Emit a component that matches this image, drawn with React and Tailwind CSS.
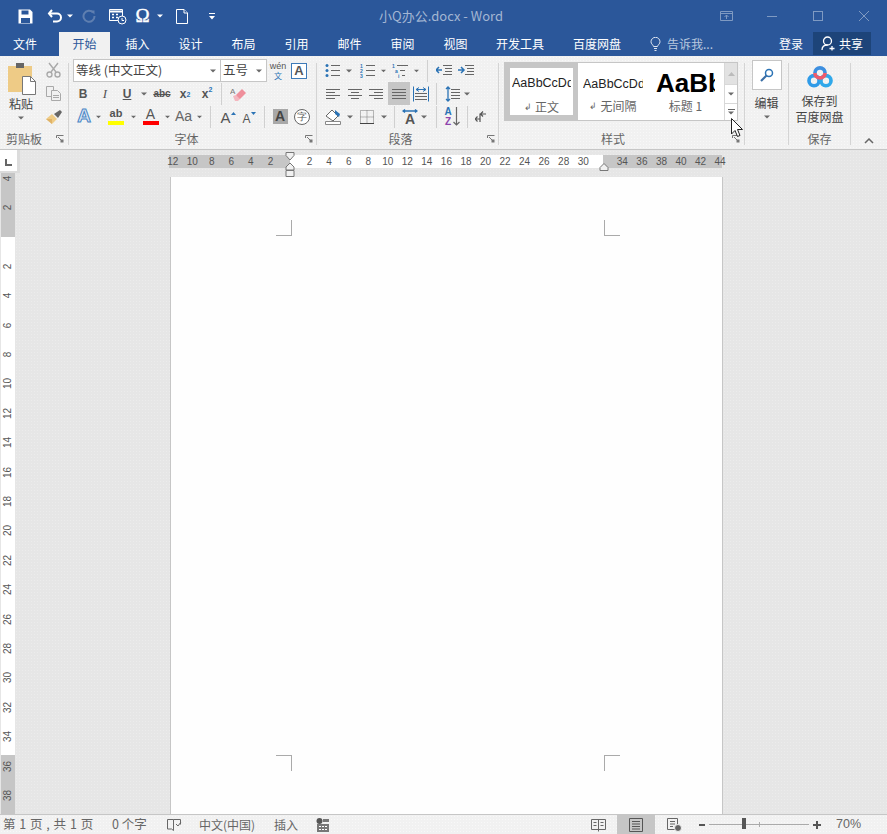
import React from 'react'

const Dd = ({ color = '#6a6a6a' }) => (
  <svg width="6" height="4" viewBox="0 0 6 4"><path d="M0 0.5h6L3 3.5z" fill={color} /></svg>
)

// one slot of a ribbon row, the class sets the width
const Cell = ({ className = '', children }) => (
  <div className={`flex h-full shrink-0 items-center justify-center ${className}`}>{children}</div>
)
const Sep = () => <div className="my-1 w-px shrink-0 bg-[#d4d4d4]" />
const RowSep = ({ className }) => (
  <Cell className={className}><div className="h-[22px] w-px bg-[#d0d0d0]" /></Cell>
)
const Launcher = ({ className = '' }) => (
  <svg className={className} width="8" height="8" viewBox="0 0 8 8" fill="none" stroke="#777">
    <path d="M0.5 3V0.5H7.5" /><path d="M7.5 7.5H4.5V4.5H7.5z" fill="#777" stroke="none" /><path d="M2 2l4 4" />
  </svg>
)
const GroupLabel = ({ className, children }) => (
  <div className={`text-center text-[12px] leading-[21px] text-[#666] ${className}`}>{children}</div>
)

const Lines = ({ w = 14, rows, color = '#666' }) => (
  <svg width={w} height="14" viewBox={`0 0 ${w} 14`} stroke={color}>
    {rows.map(([x1, x2, y], i) => <path key={i} d={`M${x1} ${y}.5H${x2}`} />)}
  </svg>
)

function Qat() {
  return (
    <div className="flex items-center">
      <Cell className="ml-[16px] w-[18px]">
        <svg width="15" height="15" viewBox="0 0 15 15"><path d="M0.5 0.5H12L14.5 3V14.5H0.5z" fill="#fff" /><path d="M3.5 1.5h7v4h-7z" fill="#2b579a" /><path d="M3 9h9v5H3z" fill="#2b579a" /></svg>
      </Cell>
      <Cell className="ml-[12px] w-[17px]">
        <svg width="16" height="14" viewBox="0 0 16 14" fill="none" stroke="#fff" strokeWidth="2"><path d="M5 1L2 4.5 5 8" /><path d="M2 4.5H10a4 4 0 0 1 0 8H6" /></svg>
      </Cell>
      <Cell className="ml-[3px] w-[7px]"><Dd color="#fff" /></Cell>
      <Cell className="ml-[8px] w-[16px]">
        <svg width="14" height="14" viewBox="0 0 14 14" fill="none" stroke="#5f7fb0" strokeWidth="2"><path d="M11 3.5A5.5 5.5 0 1 0 12.5 7" /><path d="M8.5 1.5h4v4z" fill="#5f7fb0" stroke="none" /></svg>
      </Cell>
      <Cell className="ml-[12px] w-[18px]">
        <svg width="18" height="17" viewBox="0 0 18 17" fill="none" stroke="#fff"><path d="M0.5 1.5h13v11H0.5z" /><path d="M0.5 3.5h13" strokeWidth="2" /><path d="M3 6.5h2M7 6.5h2M3 9.5h2M7 9.5h2" strokeWidth="1.5" /><circle cx="13" cy="12" r="4" fill="#2b579a" /><path d="M13 10v2.5h2" /></svg>
      </Cell>
      <span className="ml-[8px] w-[15px] text-center font-['Liberation_Serif',serif] text-[19px] leading-[18px] text-white [-webkit-text-stroke:0.4px_#fff]">Ω</span>
      <Cell className="ml-[6px] w-[7px]"><Dd color="#fff" /></Cell>
      <Cell className="ml-[12px] w-[13px]">
        <svg width="12" height="15" viewBox="0 0 12 15" fill="#2b579a" stroke="#fff"><path d="M0.5 0.5H8L11.5 4V14.5H0.5z" /><path d="M8 0.5V4H11.5" /></svg>
      </Cell>
      <Cell className="ml-[20px] w-[7px]">
        <svg width="6" height="7" viewBox="0 0 6 7" fill="#fff"><path d="M0 0h6v1H0zM0 3h6L3 6.5z" /></svg>
      </Cell>
    </div>
  )
}

function TitleBar() {
  return (
    <div className="flex h-[32px] items-center justify-between">
      <Qat />
      <div className="absolute left-[379px] text-[13px] text-[#a3b6d3]">小Q办公.docx - Word</div>
      <div className="flex items-center pr-[18px]">
        <svg width="13" height="10" viewBox="0 0 13 10" fill="none" stroke="#7f9ac2"><path d="M0.5 0.5h12v9H0.5zM0.5 2.5h12" /><path d="M6.5 8V4M4.5 6l2-2 2 2" /></svg>
        <div className="ml-[34px] h-px w-[10px] bg-[#7f9ac2]" />
        <div className="ml-[36px] h-[10px] w-[10px] border border-[#7f9ac2]" />
        <svg className="ml-[36px]" width="10" height="10" viewBox="0 0 10 10" stroke="#7f9ac2"><path d="M0 0l10 10M10 0L0 10" /></svg>
      </div>
    </div>
  )
}

function Tabs() {
  const tabs = ['插入', '设计', '布局', '引用', '邮件', '审阅', '视图']
  return (
    <div className="flex h-[24px] items-stretch whitespace-nowrap text-[12px] text-white">
      <div className="flex w-[50px] items-center justify-center">文件</div>
      <div className="ml-[9px] flex w-[51px] items-center justify-center bg-[#f1f1f1] text-[#2b579a]">开始</div>
      <div className="ml-px flex">
        {tabs.map((t) => <div key={t} className="flex w-[53px] items-center justify-center">{t}</div>)}
      </div>
      <div className="ml-[14px] flex w-[48px] items-center">开发工具</div>
      <div className="ml-[29px] flex w-[48px] items-center">百度网盘</div>
      <div className="ml-[29px] flex items-center text-[#b9c8df]">
        <svg width="11" height="14" viewBox="0 0 11 14" fill="none" stroke="#dfe6f1"><path d="M3.5 9.5C3 7.5 1 7 1 4.8a4.5 4.5 0 0 1 9 0C10 7 8 7.5 7.5 9.5z" /><path d="M4 11.5h3M4.500 13.500h2" /></svg>
        <span className="ml-[6px] w-[45px]">告诉我...</span>
      </div>
      <div className="ml-[67px] flex w-[24px] items-center">登录</div>
      <div className="ml-[10px] flex h-[23px] w-[58px] items-center justify-center bg-[#1d4479]">
        <svg width="15" height="15" viewBox="0 0 15 15" fill="none" stroke="#fff" strokeWidth="1.3"><circle cx="6.500" cy="5" r="4" /><path d="M1 14c0-3 2-5 5.500-5" /><path d="M11 10v4.500M8.500 12.500h5" /></svg>
        <span className="ml-[3px]">共享</span>
      </div>
    </div>
  )
}

function Clipboard() {
  return (
    <div className="flex w-[68px] shrink-0 flex-col">
      <div className="flex h-[72px]">
        <div className="flex w-[42px] flex-col items-center">
          <svg className="mt-[4px] ml-[2px]" width="28" height="32" viewBox="0 0 28 32">
            <path d="M0 3h24v26H0z" fill="#eecb86" /><path d="M8 0h8v5H8z" fill="#666" /><path d="M14.500 13.500h8l5 5v13h-13z" fill="#fff" stroke="#777" /><path d="M22.500 13.500v5h5" fill="none" stroke="#777" />
          </svg>
          <div className="mt-px text-[12px] leading-[16px] text-[#444]">粘贴</div>
          <div className="mt-[3px] flex h-[6px] items-center"><Dd /></div>
        </div>
        <div className="flex w-[22px] flex-col items-center">
          <svg className="mt-[3px]" width="15" height="16" viewBox="0 0 15 16" fill="none" stroke="#a9a9a9" strokeWidth="1.4"><path d="M3 1l7 9M12 1L5 10" /><circle cx="3.500" cy="12.500" r="2.500" /><circle cx="11.500" cy="12.500" r="2.500" /></svg>
          <svg className="mt-[8px]" width="15" height="15" viewBox="0 0 15 15" fill="#f1f1f1" stroke="#a9a9a9"><path d="M0.5 0.500h7v10h-7z" /><path d="M5.500 4.500h6l3 3v7h-9z" /><path d="M7 9.500h6M7 11.500h6" /></svg>
          <svg className="mt-[9px] ml-[2px]" width="18" height="15" viewBox="0 0 18 15"><path d="M1 9l6-5 5 5-5 5z" fill="#eecb86" /><path d="M1 9l6 0 0 5z" fill="#e0b368" /><path d="M9 4l6-4 2 2-4 6z" fill="#666" /></svg>
        </div>
      </div>
      <div className="flex items-center">
        <GroupLabel className="w-[48px]">剪贴板</GroupLabel>
        <Launcher className="ml-[8px]" />
      </div>
    </div>
  )
}

function FontGroup() {
  return (
    <div className="flex w-[247px] shrink-0 flex-col pl-[3px]">
      <div className="flex h-[23px] items-center">
        <div className="ml-[1px] flex h-[23px] w-[148px] items-center justify-between border border-[#c6c6c6] bg-white pr-[4px] pl-[2px] text-[12.5px] text-[#444]">
          <span>等线 (中文正文)</span><Dd />
        </div>
        <div className="-ml-px flex h-[23px] w-[47px] items-center justify-between border border-[#c6c6c6] bg-white pr-[4px] pl-[2px] text-[12.5px] text-[#444]">
          <span>五号</span><Dd />
        </div>
        <Cell className="w-[22px] flex-col">
          <span className="font-['Liberation_Sans',sans-serif] text-[9px] leading-[10px] text-[#555]">wén</span>
          <span className="text-[8px] leading-[10px] text-[#2b73b5]">文</span>
        </Cell>
        <Cell className="w-[20px]">
          <div className="flex h-[16px] w-[16px] items-center justify-center border border-[#3d7ab8] bg-white font-['Liberation_Sans',sans-serif] text-[13px] font-bold text-[#555]">A</div>
        </Cell>
      </div>
      <div className="flex h-[23px] items-center font-['Liberation_Sans',sans-serif] text-[#555]">
        <Cell className="w-[22px] text-[12px] font-bold">B</Cell>
        <Cell className="w-[22px] font-['Liberation_Serif',serif] text-[13px] italic">I</Cell>
        <Cell className="w-[22px] text-[12px] font-bold underline">U</Cell>
        <Cell className="w-[12px]"><Dd /></Cell>
        <Cell className="w-[24px] text-[10px] font-bold line-through">abc</Cell>
        <Cell className="w-[22px] text-[12px] font-bold">x<sub className="text-[7px] text-[#2b73b5]">2</sub></Cell>
        <Cell className="w-[22px] text-[12px] font-bold">x<sup className="text-[7px] text-[#2b73b5]">2</sup></Cell>
        <RowSep className="w-[6px]" />
        <Cell className="w-[28px]">
          <svg width="16" height="16" viewBox="0 0 16 16"><path d="M6 9l6-6 4 4-6 6H7z" fill="#ef8f9b" /><path d="M3 10l3-1 4 4-2 2H5z" fill="#f4b7bf" /><text x="0" y="8" fontSize="8" fill="#777" fontFamily="Liberation Sans">A</text></svg>
        </Cell>
      </div>
      <div className="flex h-[23px] items-center font-['Liberation_Sans',sans-serif] text-[#555]">
        <Cell className="w-[24px] text-[19px] font-bold text-[#dbe7f5] [-webkit-text-stroke:1px_#4a86c5]">A</Cell>
        <Cell className="w-[5px]"><Dd /></Cell>
        <Cell className="w-[30px]">
          <div className="flex flex-col items-center">
            <span className="h-[11px] text-[11px] leading-[11px] font-bold">ab</span>
            <div className="mt-[2px] h-[4px] w-[16px] bg-[#ffff00]" />
          </div>
        </Cell>
        <Cell className="w-[5px]"><Dd /></Cell>
        <Cell className="w-[29px]">
          <div className="flex flex-col items-center">
            <span className="h-[12px] text-[14px] leading-[12px]">A</span>
            <div className="mt-[1px] h-[4px] w-[16px] bg-[#ff0000]" />
          </div>
        </Cell>
        <Cell className="w-[5px]"><Dd /></Cell>
        <Cell className="w-[27px] text-[14px] text-[#666]">Aa</Cell>
        <Cell className="w-[5px]"><Dd /></Cell>
        <RowSep className="w-[16px]" />
        <Cell className="w-[20px] items-end pb-[3px]">
          <span className="text-[15px] leading-[15px]">A</span>
          <svg className="mb-[10px]" width="5" height="3" viewBox="0 0 5 3"><path d="M0 3h5L2.500 0z" fill="#2b73b5" /></svg>
        </Cell>
        <Cell className="w-[22px] items-end pb-[3px]">
          <span className="text-[12px] leading-[12px]">A</span>
          <svg className="mb-[10px]" width="5" height="3" viewBox="0 0 5 3"><path d="M0 0h5L2.500 3z" fill="#2b73b5" /></svg>
        </Cell>
        <RowSep className="w-[8px]" />
        <Cell className="w-[24px]">
          <div className="flex h-[15px] w-[15px] items-center justify-center bg-[#a8a8a8] text-[14px] font-bold text-[#444]">A</div>
        </Cell>
        <Cell className="w-[20px]">
          <div className="flex h-[16px] w-[16px] items-center justify-center rounded-full border border-[#666] bg-white text-[10px] text-[#555]">字</div>
        </Cell>
      </div>
      <div className="flex items-center">
        <GroupLabel className="w-[229px]">字体</GroupLabel>
        <Launcher className="ml-[4px]" />
      </div>
    </div>
  )
}

const Bullets = ({ nums }) => (
  <svg width="15" height="15" viewBox="0 0 15 15" stroke="#666">
    <path d="M6 2.500h9M6 7.500h9M6 12.500h9" />
    {nums
      ? <g fill="#2b73b5" stroke="none" fontSize="5" fontFamily="Liberation Sans" fontWeight="bold"><text x="0" y="4.500">1</text><text x="0" y="9.500">2</text><text x="0" y="14.500">3</text></g>
      : <g fill="#2b73b5" stroke="none"><circle cx="2" cy="2.500" r="1.500" /><circle cx="2" cy="7.500" r="1.500" /><circle cx="2" cy="12.500" r="1.500" /></g>}
  </svg>
)

function Paragraph() {
  return (
    <div className="flex w-[181px] shrink-0 flex-col pl-[3px]">
      <div className="flex h-[23px] items-center">
        <Cell className="w-[25px]"><Bullets /></Cell>
        <Cell className="w-[8px]"><Dd /></Cell>
        <Cell className="w-[28px]"><Bullets nums /></Cell>
        <Cell className="w-[5px]"><Dd /></Cell>
        <Cell className="w-[28px]">
          <svg width="16" height="15" viewBox="0 0 16 15" stroke="#666">
            <path d="M5 2.500h11M8 7.500h5M10 12.500h3" />
            <g fill="#2b73b5" stroke="none" fontSize="5" fontFamily="Liberation Sans" fontWeight="bold"><text x="0" y="4.500">1</text><text x="3" y="9.500">a</text><text x="6" y="14.500">i</text></g>
          </svg>
        </Cell>
        <Cell className="w-[5px]"><Dd /></Cell>
        <RowSep className="w-[17px]" />
        <Cell className="w-[16px]">
          <svg width="16" height="13" viewBox="0 0 16 13" stroke="#666" fill="none"><path d="M7 1.500h9M9 4.500h7M9 7.500h7M7 10.500h9" /><path d="M0 6h6M3 3L0 6l3 3" stroke="#2b73b5" strokeWidth="1.500" /></svg>
        </Cell>
        <Cell className="w-[28px]">
          <svg width="16" height="13" viewBox="0 0 16 13" stroke="#666" fill="none"><path d="M7 1.500h9M9 4.500h7M9 7.500h7M7 10.500h9" /><path d="M0 6h6M3 3l3 3-3 3" stroke="#2b73b5" strokeWidth="1.500" /></svg>
        </Cell>
      </div>
      <div className="flex h-[23px] items-center">
        <Cell className="w-[26px]"><Lines rows={[[0, 14, 2], [0, 9, 5], [0, 14, 8], [0, 9, 11]]} /></Cell>
        <Cell className="w-[18px]"><Lines rows={[[0, 14, 2], [3, 11, 5], [0, 14, 8], [3, 11, 11]]} /></Cell>
        <Cell className="w-[24px]"><Lines rows={[[0, 14, 2], [5, 14, 5], [0, 14, 8], [5, 14, 11]]} /></Cell>
        <Cell className="w-[22px] bg-[#c6c6c6]"><Lines rows={[[0, 14, 2], [0, 14, 5], [0, 14, 8], [0, 14, 11]]} /></Cell>
        <Cell className="w-[22px]">
          <svg width="16" height="16" viewBox="0 0 16 16" stroke="#666" fill="none"><path d="M0.500 0.500v15M15.500 0.500v15" stroke="#2b73b5" /><path d="M3 3.500h10M6 1.500L3 3.500l3 2M10 1.500l3 2-3 2" stroke="#2b73b5" /><path d="M2 7.500h12M2 10.500h12M2 13.500h12" /></svg>
        </Cell>
        <RowSep className="w-[8px]" />
        <Cell className="w-[24px]">
          <svg width="15" height="16" viewBox="0 0 15 16" stroke="#666" fill="none"><path d="M6 3.500h9M6 6.500h9M6 9.500h9M6 12.500h9" /><path d="M3 1v14M1 3l2-2 2 2M1 13l2 2 2-2" stroke="#2b73b5" strokeWidth="1.300" /></svg>
        </Cell>
        <Cell className="w-[6px]"><Dd /></Cell>
      </div>
      <div className="flex h-[23px] items-center">
        <Cell className="w-[26px]">
          <svg width="17" height="16" viewBox="0 0 17 16"><path d="M1 7l6-6 6 6-5 5z" fill="#fff" stroke="#666" /><path d="M10 1l5 4-1 3-4-3z" fill="#2b73b5" /><path d="M0.500 12.500h15v3H0.500z" fill="#fff" stroke="#888" /></svg>
        </Cell>
        <Cell className="w-[8px]"><Dd /></Cell>
        <Cell className="w-[26px]">
          <svg width="14" height="14" viewBox="0 0 14 14" fill="none" stroke="#777" strokeDasharray="1 1"><path d="M0.500 0.500h13v13h-13zM7 0.500v13M0.500 7h13" /><path d="M0 13.500h14" stroke="#444" strokeDasharray="none" /></svg>
        </Cell>
        <Cell className="w-[7px]"><Dd /></Cell>
        <RowSep className="w-[14px]" />
        <Cell className="w-[18px] flex-col">
          <svg width="16" height="4" viewBox="0 0 16 4" fill="none" stroke="#2b73b5" strokeWidth="1.300"><path d="M1 2h14M3 0.500L1 2l2 1.500M13 0.500L15 2l-2 1.500" /></svg>
          <span className="font-['Liberation_Sans',sans-serif] text-[14px] leading-[12px] font-bold text-[#555]">A</span>
        </Cell>
        <Cell className="w-[10px]"><Dd /></Cell>
        <RowSep className="w-[14px]" />
        <Cell className="w-[18px]">
          <div className="flex flex-col items-center font-['Liberation_Sans',sans-serif] text-[10px] leading-[10px] font-bold">
            <span className="text-[#2b73b5]">A</span><span className="text-[#8e44ad]">Z</span>
          </div>
          <svg className="ml-[1px]" width="7" height="19" viewBox="0 0 7 19" fill="none" stroke="#666" strokeWidth="1.200"><path d="M3.500 0v18M0.500 15l3 3 3-3" /></svg>
        </Cell>
        <RowSep className="w-[12px]" />
        <Cell className="w-[14px]">
          <svg width="11" height="12" viewBox="0 0 11 12" fill="none" stroke="#555" strokeWidth="1.200"><path d="M0 8h5M2.500 5.500L0 8l2.500 2.500" /><path d="M11 3H5v8M8 .5 5.500 3 8 5.500" /></svg>
        </Cell>
      </div>
      <div className="flex items-center">
        <GroupLabel className="w-[161px]">段落</GroupLabel>
        <Launcher className="ml-[6px]" />
      </div>
    </div>
  )
}

function StyleItem({ className, sample, name, enter = true }) {
  return (
    <div className={`flex shrink-0 flex-col items-center overflow-hidden ${className}`}>
      <div className={`flex h-[30px] w-full shrink-0 items-end overflow-hidden whitespace-nowrap font-['Liberation_Sans',sans-serif] ${sample}`}>AaBbCcDd</div>
      <div className="mt-px flex items-center whitespace-nowrap text-[12px] leading-[16px] text-[#666]">
        {enter && <span className="mr-[3px] text-[9px]">↲</span>}{name}
      </div>
    </div>
  )
}

function Styles() {
  return (
    <div className="flex w-[245px] shrink-0 flex-col pt-[3px]">
      <div className="ml-[5px] flex h-[60px] w-[234px] border border-[#c6c6c6] bg-white">
        <StyleItem className="h-full w-[73px] border-[5px] border-[#c6c6c6] px-[2px]" sample="text-[12.5px] text-[#222] pb-[5px]" name="正文" />
        <StyleItem className="ml-[5px] w-[60px] pt-[4px]" sample="text-[12.5px] text-[#222] pb-[3px]" name="无间隔" />
        <StyleItem className="ml-[13px] w-[59px] pt-[4px]" sample="text-[26px] leading-[28px] font-bold text-black" name="标题 1" enter={false} />
        <div className="ml-[9px] flex w-[14px] flex-col">
          <div className="flex h-[21px] items-center justify-center border-l border-[#d8d8d8] bg-[#e2e2e2]"><svg width="7" height="4" viewBox="0 0 7 4"><path d="M0 4h7L3.500 0z" fill="#bbb" /></svg></div>
          <div className="flex h-[19px] items-center justify-center border-t border-l border-[#d8d8d8]"><Dd /></div>
          <div className="flex flex-1 flex-col items-center justify-center border-t border-l border-[#d8d8d8]">
            <div className="mb-[1px] h-px w-[7px] bg-[#666]" /><Dd />
          </div>
        </div>
      </div>
      <div className="mt-[7px] flex items-center">
        <GroupLabel className="w-[228px]">样式</GroupLabel>
        <Launcher className="ml-[5px]" />
      </div>
    </div>
  )
}

function Edit() {
  return (
    <div className="flex w-[43px] shrink-0 flex-col items-center pt-px">
      <div className="flex h-[30px] w-[30px] items-center justify-center border border-[#c6c6c6] bg-white">
        <svg width="14" height="14" viewBox="0 0 14 14" fill="none"><circle cx="9" cy="5" r="3.500" stroke="#2b73b5" strokeWidth="1.500" /><path d="M6.500 7.500L1 13" stroke="#3a6ea5" strokeWidth="2.200" /></svg>
      </div>
      <div className="mt-[5px] text-[12px] leading-[15px] text-[#444]">编辑</div>
      <div className="mt-[4px] flex h-[6px] items-center"><Dd /></div>
    </div>
  )
}

function Save() {
  return (
    <div className="flex w-[61px] shrink-0 flex-col items-center">
      <svg className="mt-[7px]" width="28" height="24" viewBox="0 0 28 24" fill="none" strokeWidth="4">
        <circle cx="7.500" cy="16" r="5.500" stroke="#2f9be8" />
        <circle cx="20.500" cy="16" r="5.500" stroke="#2fa8ea" />
        <path d="M8.500 7.500a5.500 5.500 0 0 1 11 0" stroke="#3d8fe0" />
        <path d="M8.500 7.500a5.500 5.500 0 0 0 11 0" stroke="#ee5a6a" />
      </svg>
      <div className="mt-[5px] text-center text-[12px] leading-[16px] text-[#444]">保存到<br />百度网盘</div>
      <GroupLabel className="mt-[3px] w-full">保存</GroupLabel>
    </div>
  )
}

function Ribbon() {
  return (
    <div className="flex h-[94px] border-b border-[#c6c6c6] bg-[#f1f1f1] bg-[radial-gradient(circle,#f8f8f8_0.7px,transparent_0.8px)] bg-[length:3px_3px] pt-[3px] text-[#444]">
      <Clipboard /><Sep />
      <FontGroup /><Sep />
      <Paragraph /><Sep />
      <Styles /><Sep />
      <Edit /><Sep />
      <Save /><Sep />
      <div className="flex flex-1 items-end justify-center pb-[5px]">
        <svg width="10" height="6" viewBox="0 0 10 6" fill="none" stroke="#666" strokeWidth="1.500"><path d="M1 5l4-4 4 4" /></svg>
      </div>
    </div>
  )
}

const hLeft = [12, 10, 8, 6, 4, 2]
const hMid = [2, 4, 6, 8, 10, 12, 14, 16, 18, 20, 22, 24, 26, 28, 30]
const hRight = [34, 36, 38, 40, 42, 44]
const HNum = ({ n }) => <div className="w-[19.55px] shrink-0 text-center">{n}</div>

function HRuler() {
  return (
    <div className="relative h-[27px] pt-[5px]">
      <div className="flex h-[13px] items-center font-['Liberation_Sans',sans-serif] text-[10px] leading-[13px] text-[#555]">
        <div className="flex h-full w-[121px] justify-end bg-[#c6c6c6] pr-[9.8px]">{hLeft.map((n) => <HNum key={n} n={n} />)}</div>
        <div className="flex h-full w-[313px] bg-white pl-[9.8px]">{hMid.map((n) => <HNum key={n} n={n} />)}</div>
        <div className="flex h-full w-[119px] bg-[#c6c6c6] pl-[9.6px]">{hRight.map((n) => <HNum key={n} n={n} />)}</div>
      </div>
      <svg className="absolute top-[2px] left-[116px]" width="10" height="25" viewBox="0 0 10 25" fill="#f1f1f1" stroke="#777">
        <path d="M1 .5h8v3L5 8 1 3.500z" /><path d="M5 11l4 4v3H1v-3z" /><path d="M1 18.500h8v6H1z" />
      </svg>
      <svg className="absolute top-[13px] left-[430px]" width="10" height="8" viewBox="0 0 10 8" fill="#f1f1f1" stroke="#777"><path d="M5 .5l4 4v3H1v-3z" /></svg>
    </div>
  )
}

const vTop = [4, 2]
const vMid = [2, 4, 6, 8, 10, 12, 14, 16, 18, 20, 22, 24, 26, 28, 30, 32, 34]
const vBot = [36, 38]
const VNum = ({ n }) => (
  <div className="flex h-[29.4px] shrink-0 items-center justify-center">
    <span className="-rotate-90">{n}</span>
  </div>
)

function VRuler() {
  return (
    <div className="-mt-px ml-px flex w-[14px] flex-1 flex-col overflow-hidden font-['Liberation_Sans',sans-serif] text-[10px] text-[#555]">
      <div className="flex h-[65px] shrink-0 flex-col justify-end overflow-hidden bg-[#c6c6c6] pb-[14.7px]">{vTop.map((n) => <VNum key={n} n={n} />)}</div>
      <div className="flex h-[518px] shrink-0 flex-col bg-white pt-[14.7px]">{vMid.map((n) => <VNum key={n} n={n} />)}</div>
      <div className="flex-1 overflow-hidden bg-[#c6c6c6]"><div className="-mt-[3.500px]">{vBot.map((n) => <VNum key={n} n={n} />)}</div></div>
    </div>
  )
}

const Marks = ({ a, b }) => (
  <div className="flex justify-between">
    <div className={`h-[16px] w-[16px] border-[#aaa] ${a}`} />
    <div className={`h-[16px] w-[16px] border-[#aaa] ${b}`} />
  </div>
)

function Workspace() {
  return (
    <div className="flex min-h-0 flex-1 bg-[#e6e6e6] bg-[radial-gradient(circle,#ececec_0.7px,transparent_0.8px)] bg-[length:3px_3px]">
      <div className="flex w-[20px] shrink-0 flex-col">
        <div className="relative z-10 h-[23px] shrink-0 bg-[#dcdcdc] pr-[3px] pb-[2px]">
          <div className="flex h-full items-center justify-center bg-white pt-[3px]">
            <div className="h-[7px] w-[7px] border-b-2 border-l-2 border-[#666]" />
          </div>
        </div>
        <VRuler />
      </div>
      <div className="ml-[149px] flex w-[554px] flex-col">
        <HRuler />
        <div className="ml-px flex flex-1 flex-col justify-between border-x border-[#c6c6c6] bg-[#fefefe] pt-[43px] pr-[102px] pb-[43px] pl-[105px]">
          <Marks a="border-r border-b" b="border-b border-l" />
          <Marks a="border-t border-r" b="border-t border-l" />
        </div>
      </div>
    </div>
  )
}

function StatusBar() {
  return (
    <div className="flex h-[20px] items-center border-t border-[#c6c6c6] bg-[#f1f1f1] bg-[radial-gradient(circle,#f8f8f8_0.7px,transparent_0.8px)] bg-[length:3px_3px] text-[12px] text-[#666]">
      <span className="ml-[3px] w-[90px] whitespace-nowrap text-[12.5px] tracking-[0.5px]">第 1 页 , 共 1 页</span>
      <span className="ml-[19px] w-[36px] whitespace-nowrap text-[12.5px]">0 个字</span>
      <svg className="ml-[19px]" width="15" height="14" viewBox="0 0 15 14" fill="none" stroke="#666"><path d="M.5 1.500h6v11l-2-1.500h-4zM6.500 1.500h7v5M9 6l2 2 3-4" /></svg>
      <span className="ml-[17px] w-[57px] whitespace-nowrap">中文(中国)</span>
      <span className="ml-[18px] w-[26px]">插入</span>
      <svg className="ml-[16px]" width="14" height="14" viewBox="0 0 14 14"><circle cx="3.500" cy="3" r="3" fill="#555" /><path d="M1 6h12v8H1z" fill="#777" /><path d="M3 8h2v1H3zM6 8h2v1H6zM9 8h2v1H9zM3 11h2v1H3zM6 11h2v1H6zM9 11h2v1H9z" fill="#fff" /><path d="M7 1h6v3H7z" fill="#777" /></svg>
      <svg className="ml-[261px]" width="15" height="14" viewBox="0 0 15 14" fill="#f1f1f1" stroke="#666"><path d="M.5 1.500h14v10h-14z" /><path d="M7.500 1.500v12M2.500 4.500h3M2.500 7.500h3M9.500 4.500h3M9.500 7.500h3" /></svg>
      <div className="ml-[11px] flex h-[19px] w-[38px] items-center justify-center bg-[#c6c6c6]">
        <svg width="14" height="14" viewBox="0 0 14 14" fill="none" stroke="#555"><path d="M.5.500h13v13H.5z" /><path d="M3 3.500h8M3 6h8M3 8.500h8M3 11h8" /></svg>
      </div>
      <svg className="ml-[12px]" width="15" height="14" viewBox="0 0 15 14" fill="none" stroke="#666"><path d="M.5.500h10v11H.5zM3 3.500h5M3 6h5M3 8.500h3" /><circle cx="11" cy="10" r="3.500" fill="#666" stroke="#f1f1f1" /></svg>
      <div className="ml-[17px] h-[2px] w-[6px] bg-[#555]" />
      <div className="relative ml-[4px] h-px w-[100px] bg-[#aaa]">
        <div className="absolute top-[-6px] left-[33px] h-[11px] w-[4px] bg-[#555]" />
        <div className="absolute top-[-2px] left-[50px] h-[5px] w-px bg-[#aaa]" />
      </div>
      <svg className="ml-[4px]" width="8" height="8" viewBox="0 0 8 8" stroke="#555" strokeWidth="2"><path d="M0 4h8M4 0v8" /></svg>
      <span className="ml-[15px] font-['Liberation_Sans',sans-serif] text-[12.5px]">70%</span>
    </div>
  )
}

export default function App() {
  return (
    <div className="relative flex h-[834px] w-[887px] flex-col overflow-hidden font-['Noto_Sans_CJK_SC','Noto_Sans',sans-serif]">
      <div className="bg-[#2b579a]">
        <TitleBar />
        <Tabs />
      </div>
      <Ribbon />
      <Workspace />
      <StatusBar />
      {/* mouse pointer caught in the capture */}
      <svg className="absolute top-[118px] left-[731px]" width="13" height="20" viewBox="0 0 13 20">
        <path d="M.5.500v15.500l3.500-3.500 2.500 6 2.500-1-2.500-6h5z" fill="#fff" stroke="#222" />
      </svg>
    </div>
  )
}
